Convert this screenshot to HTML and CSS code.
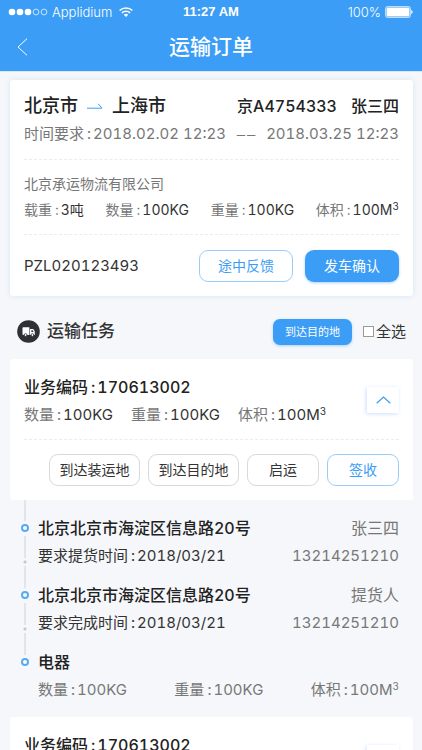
FILE: index.html
```html
<!DOCTYPE html>
<html lang="zh-CN">
<head>
<meta charset="utf-8">
<meta name="viewport" content="width=device-width, initial-scale=1">
<title>运输订单</title>
<link rel="stylesheet" href="styles.css">
</head>
<body>
<div class="screen">
  <header class="top">
    <div class="status">
      <div class="status-left">
        <svg class="signal" width="39" height="8" viewBox="0 0 39 8" aria-hidden="true"><g fill="#fff"><circle cx="3" cy="4" r="3.3"/><circle cx="11" cy="4" r="3.3"/><circle cx="19" cy="4" r="3.3"/></g><g fill="none" stroke="#fff" stroke-width=".7"><circle cx="27" cy="4" r="2.9"/><circle cx="35" cy="4" r="2.9"/></g></svg>
        <span>Applidium</span>
        <svg class="wifi" width="14" height="10" viewBox="0 0 14 10" aria-hidden="true"><g fill="none" stroke="#fff" stroke-width="1.5"><path d="M.6 3.5a9.2 9.2 0 0 1 12.8 0"/><path d="M2.9 5.9a5.9 5.9 0 0 1 8.2 0"/></g><path d="M4.8 7.7a3.2 3.2 0 0 1 4.4 0L7 10z" fill="#fff"/></svg>
      </div>
      <div class="status-time">11:27 AM</div>
      <div class="status-right">
        <span>100%</span>
        <svg width="28" height="12" viewBox="0 0 28 12" aria-hidden="true"><rect x=".5" y=".5" width="25" height="11" rx="2" fill="none" stroke="#fff" stroke-opacity=".65"/><rect x="1.5" y="1.5" width="23" height="9" rx="1" fill="#fff"/><path d="M26.3 4c1.8.8 1.8 3.2 0 4z" fill="#fff"/></svg>
      </div>
    </div>
    <div class="nav">
      <button class="back" type="button" aria-label="返回"><svg width="11" height="18" viewBox="0 0 11 18" aria-hidden="true"><path d="M10 .7 1 9l9 8.3" fill="none" stroke="#fff" stroke-width="1"/></svg></button>
      <h1>运输订单</h1>
    </div>
  </header>

  <main>
    <section class="card order">
      <div class="row route">
        <div class="cities"><span>北京市</span><svg width="16" height="6" viewBox="0 0 16 6" aria-hidden="true"><path d="M0 5.2h15L11.2.8" fill="none" stroke="#3b9df5" stroke-width="1"/></svg><span>上海市</span></div>
        <div class="driver"><span>京A4754333</span><span>张三四</span></div>
      </div>
      <div class="row period"><span>时间要求<i>:</i>2018.02.02 12:23</span><span class="dash"><span>–</span><span>–</span></span><span>2018.03.25 12:23</span></div>
      <div class="cargo">
        <p>北京承运物流有限公司</p>
        <div class="row stats small">
          <span>载重<i>:</i><b>3吨</b></span><span>数量<i>:</i><b>100KG</b></span><span>重量<i>:</i><b>100KG</b></span><span>体积<i>:</i><b>100M<sup>3</sup></b></span>
        </div>
      </div>
      <div class="row order-foot">
        <span class="number">PZL020123493</span>
        <div class="order-actions">
          <button class="btn outline" type="button">途中反馈</button>
          <button class="btn primary" type="button">发车确认</button>
        </div>
      </div>
    </section>

    <div class="section-head">
      <svg width="23" height="23" viewBox="0 0 23 23" aria-hidden="true"><circle cx="11.5" cy="11.5" r="11.3" fill="#2f3034"/><path d="M6.3 7.3h6.1v7.8H6.3a.8.8 0 0 1-.8-.8V8.1a.8.8 0 0 1 .8-.8zM13 9h2.6q.7 0 1.1.6l1.1 2v3.5H13z" fill="#fff"/><path d="M14.4 10.2h1.3l.9 1.7h-2.2z" fill="#2f3034"/><g fill="#fff" stroke="#2f3034" stroke-width=".8"><circle cx="8.6" cy="15" r="1.4"/><circle cx="15.4" cy="15" r="1.4"/></g></svg>
      <h2>运输任务</h2>
      <button class="btn primary compact" type="button">到达目的地</button>
      <label class="all"><input type="checkbox">全选</label>
    </div>

    <section class="card task">
      <div class="task-info">
        <div>
          <h3>业务编码<i>:</i>170613002</h3>
          <div class="stats inline"><span>数量<i>:</i><b>100KG</b></span><span>重量<i>:</i><b>100KG</b></span><span>体积<i>:</i><b>100M<sup>3</sup></b></span></div>
        </div>
        <button class="toggle" type="button" aria-label="收起"><svg width="15" height="8" viewBox="0 0 15 8" aria-hidden="true"><path d="M.7 7.3 7.5 1l6.8 6.3" fill="none" stroke="#3b9df5" stroke-width="1.2"/></svg></button>
      </div>
      <div class="task-actions">
        <button class="btn plain wide" type="button">到达装运地</button>
        <button class="btn plain wide" type="button">到达目的地</button>
        <button class="btn plain" type="button">启运</button>
        <button class="btn outline" type="button">签收</button>
      </div>
    </section>

    <ol class="timeline">
      <li>
        <div class="row place"><strong>北京北京市海淀区信息路20号</strong><span class="muted">张三四</span></div>
        <div class="row"><span>要求提货时间<i>:</i>2018/03/21</span><span class="muted">13214251210</span></div>
      </li>
      <li>
        <div class="row place"><strong>北京北京市海淀区信息路20号</strong><span class="muted">提货人</span></div>
        <div class="row"><span>要求完成时间<i>:</i>2018/03/21</span><span class="muted">13214251210</span></div>
      </li>
      <li>
        <div class="row place"><strong>电器</strong></div>
        <div class="row muted"><span>数量<i>:</i>100KG</span><span>重量<i>:</i>100KG</span><span>体积<i>:</i>100M<sup>3</sup></span></div>
      </li>
    </ol>

    <section class="card task">
      <div class="task-info">
        <div>
          <h3>业务编码<i>:</i>170613002</h3>
          <div class="stats inline"><span>数量<i>:</i><b>100KG</b></span><span>重量<i>:</i><b>100KG</b></span><span>体积<i>:</i><b>100M<sup>3</sup></b></span></div>
        </div>
        <button class="toggle" type="button" aria-label="展开"><svg width="15" height="8" viewBox="0 0 15 8" aria-hidden="true"><path d="M.7 7.3 7.5 1l6.8 6.3" fill="none" stroke="#3b9df5" stroke-width="1.2"/></svg></button>
      </div>
    </section>
  </main>
</div>
</body>
</html>
```
FILE: styles.css
```css
*, *::before, *::after { box-sizing: border-box; }
body {
  margin: 0;
  background: #f5f7fa;
  color: #333;
  font: 15px/24px Inter, "Noto Sans CJK SC", sans-serif;
  font-variant-numeric: tabular-nums;
}
h1, h2, h3, p, ol { margin: 0; padding: 0; }
h1, h2, h3 { font-weight: 500; }
button, input { margin: 0; padding: 0; font: inherit; }
button { border: 0; background: none; cursor: pointer; }
svg { display: block; flex: none; }
i { font-style: normal; margin: 0 2px 0 3px; }
b { font-weight: 400; color: #333; }
sup { font-size: 10px; line-height: 0; vertical-align: 5px; }

.screen { display: flex; flex-direction: column; height: 100vh; }
main {
  flex: 1;
  min-height: 0;
  overflow-y: auto;
  scrollbar-width: none;
  padding: 8px 9px 0 10px;
}

.top {
  flex: none;
  background: #3b9df5;
  color: #fff;
  border-bottom: 1px solid #d5e9fc;
}
.status {
  display: grid;
  grid-template-columns: 1fr auto 1fr;
  align-items: center;
  height: 22px;
  padding: 0 9px;
  font-size: 13px;
  font-weight: 300;
  font-variant-numeric: normal;
}
.status-left, .status-right { display: flex; align-items: center; }
.status-left { gap: 4px; }
.signal { overflow: visible; }
.wifi { margin-left: 3px; }
.status-right { justify-content: flex-end; gap: 4px; }
.status-time { font-family: "Liberation Sans", sans-serif; font-weight: 700; }
.nav {
  display: grid;
  grid-template-columns: 48px 1fr 48px;
  align-items: center;
  height: 49px;
}
.back { display: flex; padding-left: 17px; height: 44px; align-items: center; }
h1 { font-size: 21px; line-height: 30px; text-align: center; }

.row { display: flex; justify-content: space-between; white-space: nowrap; }
.card { background: #fff; border-radius: 3px; padding: 14px; }
.order { box-shadow: 0 0 5px #d3e5f8; }

.route { font-size: 18px; font-weight: 500; color: #222; }
.cities { display: flex; align-items: center; gap: 9px; }
.driver { display: flex; gap: 14px; font-size: 16px; }
.period { color: #777; margin-top: 4px; padding-bottom: 13px; }
.dash { display: flex; gap: 2px; font-family: "Liberation Sans", sans-serif; }
.period, .cargo, .task-info { border-bottom: 1px dashed #ececec; }
.cargo { padding: 12px 0; color: #777; font-size: 14px; }
.cargo p { margin-bottom: 2px; }
.stats { color: #777; }
.small { font-size: 14px; }
.inline { display: flex; gap: 18px; white-space: nowrap; }
.order-foot { align-items: center; padding-top: 15px; }
.order-actions { display: flex; gap: 12px; }
.order-actions .btn { width: 94px; }

.btn {
  height: 32px;
  border: 1px solid transparent;
  border-radius: 9px;
  font-size: 14px;
  line-height: 20px;
  white-space: nowrap;
}
.primary { background: #3b9df5; color: #fff; box-shadow: 0 1px 3px #a9d3fb; }
.outline { background: #fff; border-color: #9ccdf9; color: #3b9df5; }
.plain { background: #fff; border-color: #d9d9d9; color: #333; }
.compact { width: 79px; height: 26px; border-radius: 7px; font-size: 11px; line-height: 16px; }

.section-head { display: flex; align-items: center; padding: 22px 7px 14px; }
h2 { margin-left: 7px; margin-right: auto; font-size: 17px; line-height: 27px; }
.all { display: flex; align-items: center; gap: 2px; margin-left: 11px; }
.all input {
  appearance: none;
  width: 11px;
  height: 11px;
  border: 1px solid #999;
  background: #fff;
}
.all input:checked { background: #3b9df5; }

.task-info { display: flex; justify-content: space-between; align-items: flex-end; padding-bottom: 12px; }
h3 { margin-bottom: 2px; font-size: 16px; line-height: 28px; color: #222; }
.toggle {
  display: grid;
  place-items: center;
  width: 32px;
  height: 26px;
  margin-bottom: 14px;
  background: #fff;
  box-shadow: -1px 1px 4px #cfe0fa;
}
.task-actions { display: flex; justify-content: flex-end; gap: 8px; padding-top: 14px; }
.task-actions .btn { width: 72px; }
.task-actions .wide { width: 91px; }

.timeline {
  list-style: none;
  padding: 16px 14px 0 10px;
  background: linear-gradient(#e2e4e6, #e2e4e6) 14px 0 / 2px 21px no-repeat;
}
.timeline li { position: relative; padding: 0 0 11px 18px; }
.timeline .row { height: 28px; }
.place { font-size: 16px; }
.timeline strong { font-weight: 500; color: #222; }
.muted { color: #777; }
.timeline li::before {
  content: "";
  position: absolute;
  left: 1px;
  top: 8px;
  width: 8px;
  height: 8px;
  border: 2px solid #57abf5;
  border-radius: 50%;
  background: #fff;
}
.timeline li:not(:last-child)::after {
  content: "";
  position: absolute;
  left: 3px;
  top: 20px;
  width: 4px;
  height: 52px;
  background:
    linear-gradient(#e2e4e6, #e2e4e6) center top / 2px 22px no-repeat,
    radial-gradient(circle, #c6c8cb 1px, transparent 2px) center / 4px 4px no-repeat,
    linear-gradient(#e2e4e6, #e2e4e6) center bottom / 2px 22px no-repeat;
}
```
